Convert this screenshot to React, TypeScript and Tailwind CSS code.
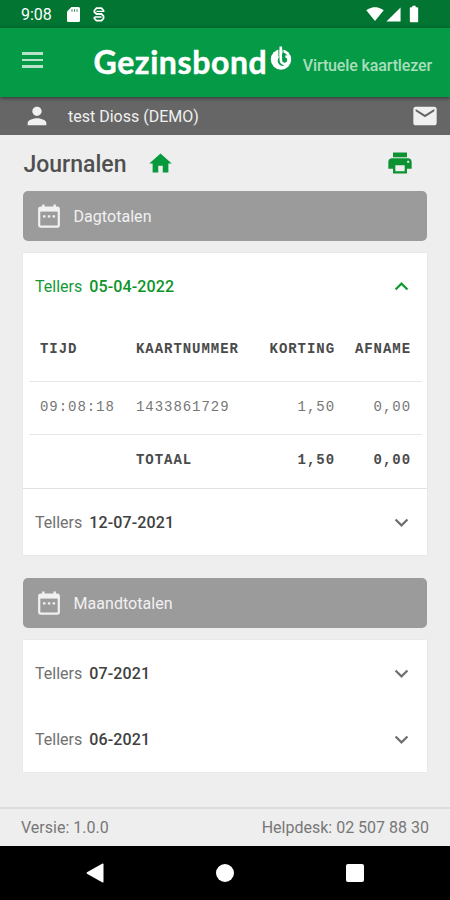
import { useState } from "react";
import {
  MdBatteryFull, MdEmail, MdExpandLess, MdExpandMore, MdHome,
  MdPerson, MdPrint, MdSignalCellular4Bar, MdSignalWifi4Bar,
} from "react-icons/md";

interface Entry {
  time: string;
  card: string;
  discount: string;
  usage: string;
}

interface Counter {
  date: string;
  entries: Entry[];
}

const dayTotals: Counter[] = [
  {
    date: "05-04-2022",
    entries: [{ time: "09:08:18", card: "1433861729", discount: "1,50", usage: "0,00" }],
  },
  { date: "12-07-2021", entries: [] },
];

const monthTotals: Counter[] = [
  { date: "07-2021", entries: [] },
  { date: "06-2021", entries: [] },
];

function StatusBar() {
  return (
    <div className="flex h-7 shrink-0 items-center bg-[#017531] pl-[21px] pr-[26px] text-white">
      <span className="pt-0.5 text-[16px] leading-none">9:08</span>
      <svg viewBox="0 0 13 15" className="ml-[15px] mt-px h-[15px] w-[13px]" fill="currentColor">
        <path d="M4.5 0H11.5Q13 0 13 1.5V13.5Q13 15 11.5 15H1.5Q0 15 0 13.5V4.5Z" />
        <path d="M5 2.2V4.8M7.5 2.2V4.8M10 2.2V4.8" stroke="#017531" strokeWidth="0.8" />
      </svg>
      <svg viewBox="0 0 12 15" className="ml-[13px] mt-px h-[15px] w-3" fill="none" stroke="currentColor" strokeWidth="1.8">
        <path d="M10.5 5V3.5L8.5 1.2H3.5L1.4 3.5V5L3.5 7H8.5L10.5 9V11.5L8.5 13.7H3.5L1.4 11.5V10" />
        <path d="M3.5 4.4H10.7M1.4 10H8.5" strokeWidth="1.3" />
      </svg>
      <div className="ml-auto flex items-center">
        <MdSignalWifi4Bar className="size-[18px]" />
        <MdSignalCellular4Bar className="ml-px size-[17px]" />
        <MdBatteryFull className="ml-[2px] size-5" />
      </div>
    </div>
  );
}

function Logo() {
  return (
    <div className="flex items-start text-white">
      <span className="font-['Lato',sans-serif] text-[32px] font-bold leading-[38px] tracking-[0.6px] [-webkit-text-stroke:0.5px_white]">
        Gezinsbond
      </span>
      <svg viewBox="0 0 22 25" className="ml-[3px] mt-[3px] h-[25px] w-[22px]">
        <circle cx="11" cy="13.5" r="10.2" fill="#fff" />
        <path d="M13.3 6.6A7 7 0 0 1 12.6 20A6.8 6.8 0 0 1 7.6 15.2Q7.6 12 10 10Z" fill="#049a46" />
        <path d="M10.8 0.5V14A3.9 3.9 0 1 0 15.4 10.2" fill="none" stroke="#fff" strokeWidth="2.6" />
        <path d="M8.8 3V10.5M13 3V10" stroke="#049a46" strokeWidth="0.9" />
      </svg>
    </div>
  );
}

function CalendarIcon() {
  return (
    <svg viewBox="0 0 22 24" className="h-6 w-[22px]" fill="none" stroke="currentColor">
      <rect x="1.2" y="3.6" width="19.6" height="19" rx="1.6" strokeWidth="2.2" />
      <path d="M1.2 5.6H20.8" strokeWidth="4" />
      <path d="M5.3 0.5V5M16.7 0.5V5" strokeWidth="2.4" />
      <path d="M5 12.4H7.5M9.8 12.4H12.3M14.6 12.4H17.1" strokeWidth="2.4" />
    </svg>
  );
}

function CounterTable({ entries }: { entries: Entry[] }) {
  return (
    <table className="ml-1.5 w-[393px] table-fixed border-collapse text-left font-['Liberation_Mono',monospace] text-[14px] tracking-[0.95px] text-[#777]">
      <thead>
        <tr className="h-[62px] font-bold text-[#4a4a4a]">
          <th className="w-[107px] pb-px pl-[11px]">TIJD</th>
          <th className="w-[122px] pb-px">KAARTNUMMER</th>
          <th className="w-[77px] pb-px text-right">KORTING</th>
          <th className="pb-px pr-[11px] text-right">AFNAME</th>
        </tr>
      </thead>
      <tbody>
        {entries.map((entry) => (
          <tr key={entry.time} className="h-[53px] border-y border-[#e6e6e6]">
            <td className="pl-[11px]">{entry.time}</td>
            <td>{entry.card}</td>
            <td className="text-right">{entry.discount}</td>
            <td className="pr-[11px] text-right">{entry.usage}</td>
          </tr>
        ))}
        <tr className="h-[54px] font-bold text-[#4a4a4a]">
          <td />
          <td className="pb-0.5">TOTAAL</td>
          <td className="pb-0.5 text-right">1,50</td>
          <td className="pb-0.5 pr-[11px] text-right">0,00</td>
        </tr>
      </tbody>
    </table>
  );
}

function CounterPanel({ counters, initial }: { counters: Counter[]; initial?: string }) {
  const [open, setOpen] = useState<string | undefined>(initial);

  return (
    <div className="bg-white shadow-[0_0_1px_rgba(0,0,0,0.12)]">
      {counters.map((counter) => {
        const isOpen = open === counter.date;
        return (
          <div key={counter.date} className={isOpen ? "border-b border-[#e2e2e2]" : ""}>
            <button
              onClick={() => setOpen(isOpen ? undefined : counter.date)}
              className={`flex h-[66px] w-full items-center px-3 text-[16px] ${isOpen ? "text-[#149a35]" : "text-[#707070]"}`}
            >
              <span className="pt-0.5">Tellers</span>
              <span className={`ml-[7px] pt-0.5 font-medium tracking-[0.15px] ${isOpen ? "text-[#0c9428]" : "text-[#404040]"}`}>
                {counter.date}
              </span>
              {isOpen ? (
                <MdExpandLess className="ml-auto size-[27px]" />
              ) : (
                <MdExpandMore className="ml-auto size-[27px]" />
              )}
            </button>
            {isOpen && <CounterTable entries={counter.entries} />}
          </div>
        );
      })}
    </div>
  );
}

function SectionBar({ title }: { title: string }) {
  return (
    <div className="mb-3 flex h-[50px] items-center rounded-[5px] bg-[#9b9b9b] pl-[15px] text-[#f1f1f1]">
      <CalendarIcon />
      <span className="ml-[13.5px] pt-0.5 text-[16px] tracking-[0.05px]">{title}</span>
    </div>
  );
}

export default function App() {
  return (
    <div className="flex h-[900px] w-[450px] flex-col overflow-hidden bg-[#eee] font-['Roboto',sans-serif]">
      <StatusBar />
      <header className="z-10 flex h-[69px] shrink-0 items-center bg-[#049a46] pl-[22px] shadow-[0_1px_4px_rgba(0,0,0,0.5)]">
        <div className="mb-[5px] flex w-[21px] flex-col gap-1">
          <div className="h-[2.5px] bg-[#b9e3c9]" />
          <div className="h-[2.5px] bg-[#b9e3c9]" />
          <div className="h-[2.5px] bg-[#b9e3c9]" />
        </div>
        <div className="mb-px ml-[50.5px]">
          <Logo />
        </div>
        <span className="ml-[10.5px] mt-[6px] whitespace-nowrap text-[16px] font-medium tracking-[-0.13px] text-[#a9dfbc]">
          Virtuele kaartlezer
        </span>
      </header>
      <div className="flex h-[38px] shrink-0 items-center bg-[#666] pl-[23px] pr-[11px] text-[#f0f0f0]">
        <MdPerson className="size-7" />
        <span className="ml-[17px] pt-0.5 text-[16px]">test Dioss (DEMO)</span>
        <MdEmail className="ml-auto size-7" />
      </div>
      <main className="flex-1 px-[23px]">
        <div className="flex h-14 items-center pr-[13px]">
          <h1 className="pl-[0.5px] pt-[5px] text-[23px] font-medium text-[#505050]">Journalen</h1>
          <MdHome className="ml-[21px] size-[27px] text-[#079a3d]" />
          <MdPrint className="ml-auto size-7 text-[#0c9230]" />
        </div>
        <SectionBar title="Dagtotalen" />
        <CounterPanel counters={dayTotals} initial="05-04-2022" />
        <div className="h-[23px]" />
        <SectionBar title="Maandtotalen" />
        <CounterPanel counters={monthTotals} />
      </main>
      <footer className="flex h-[39px] shrink-0 items-center justify-between border-t-2 border-[#dcdcdc] px-[21px] text-[16px] text-[#777]">
        <span>Versie: 1.0.0</span>
        <span>Helpdesk: 02 507 88 30</span>
      </footer>
      <nav className="flex h-[54px] shrink-0 items-center bg-black pl-[86px] text-white">
        <svg viewBox="0 0 18 20" className="h-5 w-[18px]" fill="currentColor">
          <path d="M16.5 0.5Q17.5 0.2 17.5 1.3V18.7Q17.5 19.8 16.5 19.4L1 10.7Q0 10 1 9.3Z" />
        </svg>
        <div className="ml-[112px] size-[18px] rounded-full bg-white" />
        <div className="ml-[111.5px] size-[18.5px] rounded-[2px] bg-white" />
      </nav>
    </div>
  );
}
